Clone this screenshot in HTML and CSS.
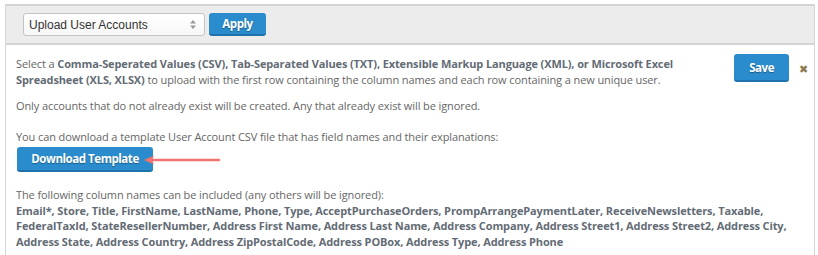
FILE: index.html
```html
<!DOCTYPE html>
<html lang="en">
<head>
    <meta charset="UTF-8">
    <title>Upload User Accounts</title>
    <link rel="stylesheet" href="styles.css">
</head>
<body>
    <div class="panel">
        <div class="toolbar">
            <div class="select">
                <span>Upload User Accounts</span>
                <svg class="caret" width="6" height="9" viewBox="0 0 6 9"><path d="M0 3.5 L3 0 L6 3.5 Z M0 5.5 L3 9 L6 5.5 Z" fill="#999"/></svg>
            </div>
            <button type="button" class="btn">Apply</button>
        </div>
        <div class="content">
            <div class="actions">
                <button type="button" class="btn btn-save">Save</button>
                <span class="close">&#x2716;</span>
            </div>
            <p class="intro">Select a <b>Comma-Seperated Values (CSV), Tab-Separated Values (TXT), Extensible Markup Language (XML), or Microsoft Excel Spreadsheet (XLS, XLSX)</b> to upload with the first row containing the column names and each row containing a new unique user.</p>
            <p class="note">Only accounts that do not already exist will be created. Any that already exist will be ignored.</p>
            <p>You can download a template User Account CSV file that has field names and their explanations:</p>
            <div class="download-row">
                <button type="button" class="btn btn-dl">Download Template</button>
                <svg class="arrow" width="80" height="12" viewBox="0 0 80 12">
                    <path d="M76 6 H10" stroke="#f07470" stroke-width="2.5" stroke-linecap="round"/>
                    <path d="M1 6 L11 1.5 L9 6 L11 10.5 Z" fill="#f07470"/>
                </svg>
            </div>
            <p>The following column names can be included (any others will be ignored):<br>
            <b>Email*, Store, Title, FirstName, LastName, Phone, Type, AcceptPurchaseOrders, PrompArrangePaymentLater, ReceiveNewsletters, Taxable, FederalTaxId, StateResellerNumber, Address First Name, Address Last Name, Address Company, Address Street1, Address Street2, Address City, Address State, Address Country, Address ZipPostalCode, Address POBox, Address Type, Address Phone</b></p>
        </div>
    </div>
</body>
</html>
```

FILE: styles.css
```css
body {
    margin: 0;
    padding: 4px 0 0 5px;
    width: 810px;
    font-family: 'Open Sans', sans-serif;
    font-size: 11px;
    letter-spacing: -0.1px;
    color: #666;
    background: #fff;
}
.panel {
    border-left: 1px solid #d6d6d6;
    border-right: 1px solid #d6d6d6;
    height: 260px;
}
.toolbar {
    background-color: #ececec;
    border-top: 2px solid #d4d4d4;
    border-bottom: 2px solid #d4d4d4;
    height: 37px;
    display: flex;
    align-items: center;
    padding-left: 17px;
    gap: 4px;
}
.select {
    width: 182px;
    height: 23px;
    border: 1px solid #c4c4c4;
    border-radius: 3px;
    background: linear-gradient(#fff, #f7f7f7);
    display: flex;
    align-items: center;
    justify-content: space-between;
    padding: 0 8px 0 5px;
    box-sizing: border-box;
    color: #333;
    font-family: 'Liberation Sans', Arial, sans-serif;
    font-size: 12px;
    letter-spacing: 0;
}
.btn {
    background-color: #2a8ccd;
    border: none;
    border-bottom: 2px solid #1f72ab;
    border-radius: 3px;
    color: #fff;
    font-family: 'Open Sans', sans-serif;
    font-weight: bold;
    font-size: 11.5px;
    letter-spacing: -0.45px;
    text-shadow: 0 1px 1px rgba(0, 0, 0, 0.35);
    cursor: pointer;
    width: 57px;
    height: 23px;
    padding: 0;
}
.content {
    padding: 11px 20px 0 10px;
}
.content p {
    margin: 0;
    line-height: 15.5px;
}
.content p.intro {
    margin-bottom: 11px;
}
.content p.note {
    margin-bottom: 15px;
}
.content b {
    color: #636b75;
    letter-spacing: -0.12px;
}
.download-row {
    display: flex;
    align-items: center;
    margin: 3px 0 15px 1px;
}
.btn-dl {
    width: 136px;
    height: 25px;
}
.arrow {
    margin-left: -10px;
}
.actions {
    float: right;
    display: flex;
    align-items: center;
    gap: 10px;
    margin: -2px -14px 0 30px;
}
.btn-save {
    width: 55px;
    height: 28px;
}
.close {
    color: #8c7b50;
    font-size: 11px;
}
```
